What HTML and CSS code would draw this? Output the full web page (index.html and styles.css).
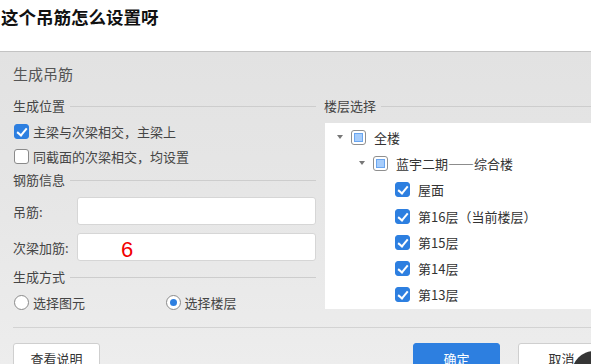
FILE: index.html
```html
<!DOCTYPE html>
<html lang="zh-CN">
<head>
  <meta charset="UTF-8">
  <meta name="viewport" content="width=device-width, initial-scale=1.0">
  <title>这个吊筋怎么设置呀</title>
  <link rel="stylesheet" href="styles.css">
</head>
<body>

  <h1 class="question">这个吊筋怎么设置呀</h1>

  <!-- 生成吊筋 对话框 -->
  <div class="dialog">
    <div class="dialog-title">生成吊筋</div>

    <div class="dialog-body">
      <div class="left-col">
        <div class="legend"><span>生成位置</span></div>
        <label class="check-row row-1"><span class="box checked"></span>主梁与次梁相交，主梁上</label>
        <label class="check-row row-2"><span class="box"></span>同截面的次梁相交，均设置</label>

        <div class="legend legend-2"><span>钢筋信息</span></div>
        <div class="field field-1">
          <span class="field-label">吊筋:</span>
          <div class="field-input"></div>
        </div>
        <div class="field field-2">
          <span class="field-label">次梁加筋:</span>
          <div class="field-input"></div>
        </div>

        <div class="legend legend-3"><span>生成方式</span></div>
        <div class="radio-row">
          <label class="radio"><span class="dot"></span>选择图元</label>
          <label class="radio"><span class="dot on"></span>选择楼层</label>
        </div>
      </div>

      <div class="right-col">
        <div class="legend"><span>楼层选择</span></div>
        <div class="tree">
          <div class="tree-row lv0"><span class="arrow"></span><span class="box partial"></span>全楼</div>
          <div class="tree-row lv1"><span class="arrow"></span><span class="box partial"></span>蓝宇二期——综合楼</div>
          <div class="tree-row lv2"><span class="box checked"></span>屋面</div>
          <div class="tree-row lv2"><span class="box checked"></span>第16层（当前楼层）</div>
          <div class="tree-row lv2"><span class="box checked"></span>第15层</div>
          <div class="tree-row lv2"><span class="box checked"></span>第14层</div>
          <div class="tree-row lv2"><span class="box checked"></span>第13层</div>
        </div>
      </div>
    </div>

    <div class="separator"></div>

    <div class="footer">
      <button class="btn">查看说明</button>
      <div class="footer-right">
        <button class="btn primary">确定</button>
        <button class="btn">取消</button>
      </div>
    </div>

    <!-- 手写的标注 -->
    <span class="mark">6</span>
    <span class="float-ball"></span>
  </div>

</body>
</html>
```

FILE: styles.css
```css
:root {
  --text: #454545;
  --line: #cdcdcd;
  --blue: #2d7fe0;
}

body {
  margin: 0;
  height: 364px;
  overflow: hidden;
  background: #fff;
  font-family: "Noto Sans CJK SC", "Noto Sans", sans-serif;
  color: var(--text);
}

.question {
  margin: 0;
  height: 51px;
  padding: 6px 0 0 1px;
  box-sizing: border-box;
  font-size: 17.5px;
  line-height: 22px;
  font-weight: bold;
  color: #111;
}

.dialog {
  position: relative;
  overflow: hidden;
  height: 313px;
  border-top: 1px solid #c3c3c3;
  background: linear-gradient(#e2e2e2, #e6e6e6 45%, #ededed);
  padding: 12px 0 0 13px;
  box-sizing: border-box;
}

.dialog-title {
  font-size: 15px;
  line-height: 20px;
  color: #555;
}

.dialog-body {
  display: grid;
  grid-template-columns: 303px 1fr;
  column-gap: 8px;
  margin-top: 13px;
  font-size: 13px;
}

.legend {
  display: flex;
  align-items: center;
  height: 18px;
  line-height: 18px;
}

.legend::after {
  content: "";
  flex: 1;
  height: 1px;
  background: var(--line);
  margin-left: 5px;
}

.check-row {
  display: flex;
  align-items: center;
  height: 20px;
  margin-left: 1px;
}

.row-1 { margin-top: 6px; }
.row-2 { margin-top: 5px; }

.box {
  width: 15px;
  height: 15px;
  box-sizing: border-box;
  border: 1px solid #8a8a8a;
  border-radius: 3px;
  background: #fff;
  margin-right: 4px;
  flex: none;
  position: relative;
}

.box.checked {
  background: var(--blue);
  border-color: var(--blue);
}

.box.checked::after {
  content: "";
  position: absolute;
  left: 4px;
  top: 1px;
  width: 4px;
  height: 8px;
  border: solid #fff;
  border-width: 0 2px 2px 0;
  transform: rotate(40deg);
}

.box.partial {
  border-color: #8f8f8f;
  padding: 2px;
}

.box.partial::after {
  content: "";
  display: block;
  width: 100%;
  height: 100%;
  box-sizing: border-box;
  background: #a7cdfb;
  border: 1px solid #6aa6f0;
}

.legend-2 { margin-top: 5px; }

.field {
  display: flex;
  align-items: center;
}

.field-1 { margin-top: 8px; }
.field-2 { margin-top: 8px; }

.field-label {
  width: 64px;
  flex: none;
}

.field-input {
  flex: 1;
  height: 28px;
  background: #fff;
  border: 1px solid #d6d6d6;
  border-radius: 3px;
  box-sizing: border-box;
}

.legend-3 { margin-top: 7px; }

.radio-row {
  display: flex;
  height: 20px;
  margin-top: 6px;
}

.radio {
  display: flex;
  align-items: center;
  width: 156px;
  margin-left: 1px;
}

.dot {
  width: 15px;
  height: 15px;
  box-sizing: border-box;
  border: 1px solid #8a8a8a;
  border-radius: 50%;
  background: #fff;
  margin-right: 4px;
  position: relative;
}

.dot.on::after {
  content: "";
  position: absolute;
  left: 3px;
  top: 3px;
  width: 7px;
  height: 7px;
  border-radius: 50%;
  background: var(--blue);
}

.tree {
  margin-top: 8px;
  margin-left: 1px;
  height: 186px;
  box-sizing: border-box;
  padding-top: 1px;
  background: #fff;
  color: #333;
}

.tree-row {
  display: flex;
  align-items: center;
  height: 26.3px;
}

.tree-row .box {
  margin-right: 8px;
}

.lv0 { padding-left: 12px; }
.lv1 { padding-left: 34px; }
.lv2 { padding-left: 70px; }

.arrow {
  width: 0;
  height: 0;
  border-left: 3.5px solid transparent;
  border-right: 3.5px solid transparent;
  border-top: 4px solid #777;
  margin-right: 8px;
}

.separator {
  height: 1px;
  background: #d3d3d3;
  margin-top: 15px;
}

.footer {
  display: flex;
  margin-top: 15px;
}

.footer-right {
  display: flex;
  gap: 18px;
  margin-left: 313px;
}

.btn {
  flex: none;
  width: 87px;
  height: 30px;
  padding: 0;
  font-family: inherit;
  font-size: 13px;
  color: #333;
  background: #fff;
  border: 1px solid #cfcfcf;
  border-radius: 3px;
}

.btn.primary {
  background: var(--blue);
  border-color: var(--blue);
  color: #fff;
}

.mark {
  position: absolute;
  left: 121px;
  top: 187px;
  font-family: "Liberation Sans", sans-serif;
  font-size: 22px;
  line-height: 22px;
  color: #f20000;
}

.float-ball {
  position: absolute;
  left: 572px;
  top: 299px;
  width: 44px;
  height: 44px;
  border-radius: 50%;
  background: #353535;
}
```
